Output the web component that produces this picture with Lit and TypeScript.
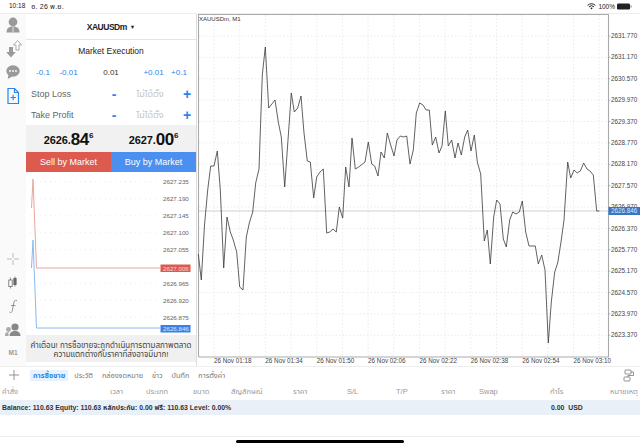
import { LitElement, html, css, svg } from "lit";
import { customElement } from "lit/decorators.js";

// chart line, traced from the reference (page coordinates)
const LINE = [
  [198.3,254],[201.3,280],[204.5,225],[207.7,190],[210.7,166],[214,166],[217.3,151],[220.3,190],[223.7,268],[227,217],
  [230.3,232],[233.3,240],[236.7,252],[239.7,287],[243,290],[246.3,237],[249.3,223],[252.7,212],[255.7,183],[259,169],
  [262.3,75],[265.3,47],[268.7,108],[275,100],[278.3,122],[281.3,137],[284.7,187],[288,140],[291.3,93],[294.3,112],
  [297.7,108],[301,96],[304,133],[307.3,161],[310.3,162],[313.7,198],[316.7,177],[320,172],[323.3,169],[326.7,233],
  [329.7,232],[333,229],[336.3,232],[339.3,207],[342.7,218],[345.7,167],[349,187],[352,138],[355.3,169],[358.7,167],
  [365,162],[368.3,142],[371.7,164],[374.7,166],[378,176],[381,152],[384.3,158],[387.3,133],[390.7,145],[394,156],
  [397,140],[400.3,136],[403.7,137],[406.7,136],[410,164],[413.3,150],[416.3,113],[419.7,103],[423,105],[426,110],
  [429.3,110],[432.3,145],[435.7,137],[439,153],[442,146],[445.3,111],[448.3,146],[451.7,140],[455,158],[458,143],
  [461.3,155],[464.7,137],[467.7,130],[471,151],[474.3,135],[477.3,162],[480.7,174],[484.3,241],[487.3,230],[490.3,264],
  [493.7,217],[496.7,200],[500,204],[503.3,239],[506.3,247],[509.7,220],[512.7,212],[516,214],[519.3,212],[522.3,201],
  [525.7,232],[529,246],[532,246],[535.3,246],[538.3,264],[541.7,255],[545,270],[548.3,343],[551.3,302],[554.7,272],
  [557.7,263],[561,242],[564,220],[567.7,162],[570.7,178],[574,170],[577.3,173],[580.3,171],[583.7,163],[587,169],
  [590,171],[593.3,175],[596.7,211],[599.3,211],
];
const PRICES = ["2631.770","2631.170","2630.570","2629.970","2629.370","2628.770","2628.170","2627.570","2626.970","2626.370","2625.770","2625.170","2624.570","2623.970","2623.370"];
const TIMES = ["26 Nov 01:18","26 Nov 01:34","26 Nov 01:50","26 Nov 02:06","26 Nov 02:22","26 Nov 02:38","26 Nov 02:54","26 Nov 03:10"];
const MINI = [["2627.235",182.7],["2627.190",199.7],["2627.145",216.7],["2627.100",233.4],["2627.055",250.7],["2626.965",284.3],["2626.920",301.3],["2626.875",318.3]] as const;
const COLS = ["คำสั่ง","เวลา","ประเภท","ขนาด","สัญลักษณ์","ราคา","S/L","T/P","ราคา","Swap","กำไร","หมายเหตุ"];

@customElement("app-root")
export class AppRoot extends LitElement {
  static styles = css`
    :host { display: block; width: 640px; height: 447px; overflow: hidden; background: #fff; position: relative;
      font-family: "Liberation Sans", "Noto Sans Thai", "Noto Sans", sans-serif; color: #222; }
    .status { height: 13px; display: flex; align-items: center; justify-content: space-between; padding: 0 8px 0 9px; font-size: 6.5px; color: #222; }
    .status .left { display: flex; gap: 6px; }
    .status .date { font-size: 7px; letter-spacing: .2px; }
    .status .right { display: flex; align-items: center; gap: 2px; }
    .main { height: 353px; display: flex; position: relative; border-top: 1px solid #eee; box-sizing: border-box; }
    .side { width: 26px; background: #fafafa; display: flex; flex-direction: column; align-items: center; gap: 4px; box-sizing: border-box; }
    .side svg { display: block; flex: none; }
    .side .gap { flex: 1; }
    .side .m1 { font-size: 6.5px; font-weight: bold; color: #9a9a9a; height: 16px; line-height: 16px; margin-bottom: 5px; flex: none; }
    .panel { width: 171px; display: flex; flex-direction: column; border-right: 1px solid #ddd; box-sizing: border-box; }
    .sym { height: 26px; flex: none; display: flex; align-items: center; justify-content: center; gap: 3px; font-size: 8.5px; font-weight: bold; letter-spacing: -.5px; border-bottom: 1px solid #e4e4e4; box-sizing: border-box; }
    .sym i { font-style: normal; font-size: 5.5px; letter-spacing: 0; }
    .exec { height: 21px; flex: none; display: flex; align-items: center; justify-content: center; font-size: 8.5px; }
    .steps { height: 22px; flex: none; display: grid; grid-template-columns: 24px 27px 1fr 27px 24px; align-items: center; justify-items: center; font-size: 8px; color: #2a86ee; padding: 0 5px 0 5px; }
    .steps b { font-weight: normal; color: #333; }
    .row { height: 21px; flex: none; display: grid; grid-template-columns: 76px 14px 1fr 16px; align-items: center; padding: 0 1px 0 5px; font-size: 9px; color: #666; }
    .row span { justify-self: center; color: #2a86ee; font-size: 14px; line-height: 1; font-weight: bold; }
    .row em { justify-self: center; font-style: normal; font-size: 9px; color: #c4c4c4; }
    .prices { height: 27px; flex: none; display: grid; grid-template-columns: 1fr 1fr; background: #f1f1f1; color: #111; font-weight: bold; }
    .price { display: flex; align-items: flex-start; justify-content: center; padding-top: 5px; font-size: 11px; line-height: 20px; letter-spacing: -0.1px; }
    .price big { font-size: 17px; letter-spacing: -0.3px; }
    .price sup { font-size: 8px; line-height: 12px; vertical-align: baseline; }
    .actions { height: 20px; flex: none; display: grid; grid-template-columns: 1fr 1fr; color: #fff; font-size: 9px; }
    .actions div { display: flex; align-items: center; justify-content: center; }
    .sell { background: #dc5a4e; }
    .buy { background: #4b8ff0; }
    .mini { flex: 1; }
    .note { height: 27px; flex: none; background: #f0f0f0; font-size: 8px; line-height: 8.5px; color: #444; text-align: center; padding: 7px 0 0; box-sizing: border-box; margin-bottom: 4px; white-space: nowrap; }
    .chart { position: absolute; left: 0; top: -14px; width: 640px; height: 367px; pointer-events: none; font-family: "Liberation Sans", sans-serif; }
    .tabs { height: 17px; display: flex; align-items: center; font-size: 7.3px; color: #777; position: relative; border-top: 1px solid #eee; box-sizing: border-box; }
    .plus { width: 27px; flex: none; display: flex; justify-content: center; }
    .tab { padding: 0 3px; margin-right: 3px; line-height: 11px; white-space: nowrap; }
    .tab.on { background: #e8f1fc; color: #2a86ee; font-weight: bold; padding: 0 3px; margin-left: 3px; }
    .layout { margin-left: auto; margin-right: 5px; display: flex; }
    .head { height: 17px; display: grid; grid-template-columns: 108px 36px 47px 38px 62px 54px 49px 45px 38px 71px 60px 1fr; align-items: center; font-size: 7.5px; color: #999; padding-left: 2px; white-space: nowrap; }
    .bal { height: 15px; display: grid; grid-template-columns: 549px 1fr; align-items: center; background: #eaf0f8; font-size: 6.9px; font-weight: bold; color: #333; padding-left: 2px; white-space: nowrap; }
    .foot { height: 32px; position: relative; }
    .foot .line { height: 22px; border-bottom: 1px solid #eee; box-sizing: border-box; }
    .home { position: absolute; left: 236px; top: 25px; width: 168px; height: 3px; border-radius: 2px; background: #000; }
  `;

  private icons() {
    const c = "#9a9a9a";
    return html`
      <svg width="20" height="20" viewBox="0 0 20 20"><circle cx="10" cy="8" r="4.400" fill=${c}/><path d="M3.500 18.500c0-4.500 2.800-6 6.500-6s6.500 1.500 6.500 6z" fill=${c}/><path d="M10 13v5.500" stroke="#fff" stroke-width=".7"/></svg>
      <svg width="20" height="20" viewBox="0 0 20 20"><path d="M6 9h4v5h2.800L8 19.500 3.200 14H6z" fill=${c}/><path d="M13 12V7h-2.500L14.500 2.500 18.500 7H16v5z" fill="#fff" stroke=${c} stroke-width=".8"/></svg>
      <svg width="20" height="20" viewBox="0 0 20 20"><ellipse cx="10" cy="9" rx="6.700" ry="5.800" fill=${c}/><path d="M5.500 12.500l-.8 4.500 4.500-2.500z" fill=${c}/><circle cx="7" cy="9" r=".9" fill="#fff"/><circle cx="10" cy="9" r=".9" fill="#fff"/><circle cx="13" cy="9" r=".9" fill="#fff"/></svg>
      <svg width="20" height="20" viewBox="0 0 20 20" fill="none" stroke="#2a86ee" stroke-width="1.200"><path d="M5 2.500h6.500l4 4v11H5z"/><path d="M11.500 2.500v4h4"/><path d="M7.500 11.500h5.500M10.200 8.800v5.500"/></svg>
      <div class="gap"></div>
      <svg width="20" height="20" viewBox="0 0 20 20" fill="none" stroke="#aaa" stroke-width=".8"><path d="M10 4v4.800M10 11.200V16M4 10h4.800M11.200 10H16"/></svg>
      <svg width="20" height="20" viewBox="0 0 20 20"><path d="M7.500 4.500v11M12 3.500v10" stroke="#666" stroke-width=".7"/><rect x="5.800" y="7" width="3.400" height="6.500" fill="#fff" stroke="#666" stroke-width=".8"/><rect x="10.400" y="5" width="3.200" height="7" fill="#666"/></svg>
      <svg width="20" height="20" viewBox="0 0 20 20" fill="none" stroke="#888" stroke-width=".9"><path d="M14 3.500c-2.500-.8-3 .8-3.400 3.500l-1.300 6.500c-.4 2-1.200 2.500-2.800 1.500M8 8.500h4.500"/></svg>
      <svg style="margin-top:-2px;margin-bottom:2px" width="20" height="20" viewBox="0 0 20 20"><circle cx="12" cy="8" r="3.600" fill="#888"/><path d="M6.500 17c0-3.500 2.200-5 5.500-5s5.500 1.500 5.500 5z" fill="#888"/><circle cx="5.500" cy="10.500" r="2.400" fill="#aaa"/><path d="M2 17v-1.500c0-1.500 1.500-2.500 3.500-2.500v4z" fill="#aaa"/></svg>
      <div class="m1">M1</div>
    `;
  }

  private chart() {
    const pts = LINE.map((p) => p.join(",")).join(" ");
    const gridY = PRICES.map((_, i) => 36 + i * 21.38);
    const gridX = Array.from({ length: 16 }, (_, i) => 214 + i * 25.68);
    return html`<svg class="chart" width="640" height="367" viewBox="0 0 640 367">
      ${gridY.map((y) => svg`<line x1="199" x2="608" y1=${y} y2=${y} stroke="#ddd" stroke-width=".6" stroke-dasharray="1.500 2"/>`)}
      ${gridX.map((x) => svg`<line y1="15" y2="356" x1=${x} x2=${x} stroke="#ddd" stroke-width=".6" stroke-dasharray="1.500 2"/>`)}
      <path d="M198.500 357V14.500H608.500V357H198.500" fill="none" stroke="#aaa" stroke-width="1.100"/>
      <line x1="199" x2="608" y1="211" y2="211" stroke="#bbb" stroke-width=".7"/>
      <polyline points=${pts} fill="none" stroke="#3a3a3a" stroke-width=".8"/>
      <text x="199" y="21" font-size="6" fill="#333">XAUUSDm, M1</text>
      ${PRICES.map((p, i) => svg`<line x1="608" x2="610.500" y1=${gridY[i]} y2=${gridY[i]} stroke="#999" stroke-width=".6"/><text x="611" y=${gridY[i] + 2.100} font-size="6.300" fill="#444">${p}</text>`)}
      <rect x="608.500" y="207" width="32" height="8" fill="#3a74c4"/>
      <text x="611" y="213.100" font-size="6.300" fill="#dfe9f7">2626.846</text>
      ${TIMES.map((t, i) => svg`<text x=${214 + i * 51.36} y="363" font-size="6.300" fill="#444">${t}</text>`)}
    </svg>`;
  }

  private mini() {
    return html`<svg class="chart" width="640" height="367" viewBox="0 0 640 367">
      ${MINI.map(([l, y]) => svg`<line x1="30" x2="160" y1=${y - 1} y2=${y - 1} stroke="#ddd" stroke-width=".6" stroke-dasharray="1 4"/><text x="163" y=${y + 1.500} font-size="6.200" fill="#666">${l}</text>`)}
      <polyline points="31.500,208 33,179 36.500,268 160,268" fill="none" stroke="#e9a69f" stroke-width="1"/>
      <polyline points="31.500,268 33,240 36.500,328 160,328" fill="none" stroke="#8db8f2" stroke-width="1"/>
      <rect x="160.500" y="264.500" width="30" height="7.500" fill="#dc5a4e"/>
      <text x="163" y="270.500" font-size="6.200" fill="#f6d9d6">2627.006</text>
      <rect x="160.500" y="325" width="30" height="7.500" fill="#3c80e6"/>
      <text x="163" y="331" font-size="6.200" fill="#dbe8fb">2626.846</text>
    </svg>`;
  }

  render() {
    return html`
      <div class="status">
        <div class="left"><span>10:18</span><span class="date">อ. 26 พ.ย.</span></div>
        <div class="right">
          <svg width="9" height="7" viewBox="0 0 9 7" fill="none" stroke="#222"><path d="M.6 2.400a5.500 5.500 0 0 1 7.800 0M2 3.900a3.500 3.500 0 0 1 5 0" stroke-width="1"/><path d="M3.300 5.100L4.500 6.500 5.700 5.100a1.700 1.700 0 0 0-2.400 0z" fill="#222" stroke="none"/></svg>
          <span>100%</span>
          <svg width="15" height="7" viewBox="0 0 15 7"><rect width="13" height="6" y=".5" rx="1.200" fill="#222"/><rect x="13.500" y="2.300" width="1" height="2.400" fill="#888"/></svg>
        </div>
      </div>
      <div class="main">
        ${this.chart()}
        <div class="side">${this.icons()}</div>
        <div class="panel">
          <div class="sym">XAUUSDm <i>▼</i></div>
          <div class="exec">Market Execution</div>
          <div class="steps"><span>-0.1</span><span>-0.01</span><b>0.01</b><span>+0.01</span><span>+0.1</span></div>
          <div class="row">Stop Loss<span>-</span><em>ไม่ได้ตั้ง</em><span>+</span></div>
          <div class="row">Take Profit<span>-</span><em>ไม่ได้ตั้ง</em><span>+</span></div>
          <div class="prices">
            <div class="price">2626.<big>84</big><sup>6</sup></div>
            <div class="price">2627.<big>00</big><sup>6</sup></div>
          </div>
          <div class="actions"><div class="sell">Sell by Market</div><div class="buy">Buy by Market</div></div>
          <div class="mini"></div>
          <div class="note">คำเตือน! การซื้อขายจะถูกดำเนินการตามสภาพตลาด<br />ความแตกต่างกับราคาที่ส่งอาจมีมาก!</div>
        </div>
        ${this.mini()}
      </div>
      <div class="tabs">
        <div class="plus"><svg width="12" height="12" viewBox="0 0 12 12" stroke="#888" stroke-width=".9"><path d="M6 1v10M1 6h10"/></svg></div>
        <div class="tab on">การซื้อขาย</div><div class="tab">ประวัติ</div><div class="tab">กล่องจดหมาย</div><div class="tab">ข่าว</div><div class="tab">บันทึก</div><div class="tab">การตั้งค่า</div>
        <div class="layout"><svg width="12" height="13" viewBox="0 0 12 13" fill="none" stroke="#777" stroke-width=".8"><rect x="2" y="1" width="6" height="4" rx=".6"/><rect x="1" y="8" width="6" height="4" rx=".6"/><path d="M8 3h2.500v3.500H5V8"/></svg></div>
      </div>
      <div class="head">${COLS.map((c) => html`<span>${c}</span>`)}</div>
      <div class="bal"><span>Balance: 110.63 Equity: 110.63 หลักประกัน: 0.00 ฟรี: 110.63 Level: 0.00%</span><span>0.00&nbsp; USD</span></div>
      <div class="foot"><div class="line"></div><div class="home"></div></div>
    `;
  }
}
